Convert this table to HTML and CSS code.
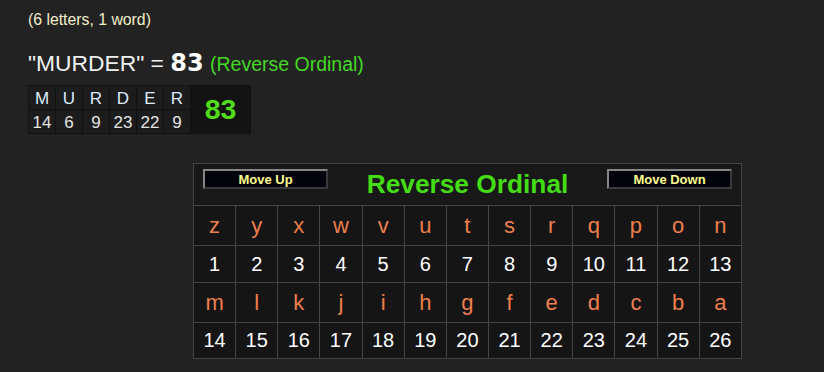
FILE: index.html
```html
<!DOCTYPE html>
<html>
<head>
<meta charset="utf-8">
<link rel="stylesheet" href="styles.css">
</head>
<body>
<div class="page">
  <div class="count">(6 letters, 1 word)</div>
  <div class="result"><span class="word">"MURDER" =</span> <span class="total">83</span> <span class="cipher">(Reverse Ordinal)</span></div>
  <table class="breakdown">
    <tr class="letters"><td>M</td><td>U</td><td>R</td><td>D</td><td>E</td><td>R</td><td class="sum" rowspan="2">83</td></tr>
    <tr class="nums"><td>14</td><td>6</td><td>9</td><td>23</td><td>22</td><td>9</td></tr>
  </table>
  <table class="chart">
    <tr class="head">
      <td colspan="13">
        <div class="head-bar">
          <button class="move">Move Up</button>
          <div class="title">Reverse Ordinal</div>
          <button class="move">Move Down</button>
        </div>
      </td>
    </tr>
    <tr class="l"><td>z</td><td>y</td><td>x</td><td>w</td><td>v</td><td>u</td><td>t</td><td>s</td><td>r</td><td>q</td><td>p</td><td>o</td><td>n</td></tr>
    <tr class="n1"><td>1</td><td>2</td><td>3</td><td>4</td><td>5</td><td>6</td><td>7</td><td>8</td><td>9</td><td>10</td><td>11</td><td>12</td><td>13</td></tr>
    <tr class="l"><td>m</td><td>l</td><td>k</td><td>j</td><td>i</td><td>h</td><td>g</td><td>f</td><td>e</td><td>d</td><td>c</td><td>b</td><td>a</td></tr>
    <tr class="n2"><td>14</td><td>15</td><td>16</td><td>17</td><td>18</td><td>19</td><td>20</td><td>21</td><td>22</td><td>23</td><td>24</td><td>25</td><td>26</td></tr>
  </table>
</div>
</body>
</html>
```
FILE: styles.css
```css
html, body {
  margin: 0;
  padding: 0;
  background: #222222;
}
body {
  font-family: "Liberation Sans", Arial, sans-serif;
  width: 824px;
  height: 372px;
  overflow: hidden;
}
.page {
  padding: 11px 0 0 28px;
}
.count {
  font-size: 15.8px;
  line-height: 18px;
  color: #f2eec8;
}
.result {
  margin-top: 19px;
  height: 30px;
  line-height: 30px;
  font-size: 22.8px;
  color: #f0f0f0;
  white-space: nowrap;
}
.result .total {
  font-family: "DejaVu Sans", Verdana, sans-serif;
  font-weight: bold;
  font-size: 24px;
  color: #ffffff;
}
.result .cipher {
  font-size: 19.5px;
  color: #44d922;
}
.breakdown {
  margin-top: 7px;
  border-collapse: separate;
  border-spacing: 1px;
  background: #111111;
}
.breakdown td {
  width: 26px;
  height: 23px;
  padding: 0;
  background: #1c1c1c;
  text-align: center;
  vertical-align: middle;
  font-size: 17px;
  line-height: 19px;
}
.breakdown .letters td {
  color: #dcecff;
  padding-top: 2px;
  height: 21px;
}
.breakdown .nums td {
  color: #e4e4e4;
  padding-top: 2px;
  height: 21px;
}
.breakdown td.sum {
  width: 59px;
  background: #131313;
  color: #4fdc14;
  font-weight: bold;
  font-size: 28.5px;
  padding-top: 0;
}
.chart {
  margin: 29px 0 0 165px;
  width: 549px;
  table-layout: fixed;
  border-collapse: collapse;
  border: 1px solid #3e3e3e;
  background: #151515;
}
.chart td {
  border: 1px solid #444444;
  padding: 0;
  text-align: center;
  vertical-align: middle;
}
.chart .head td {
  background: #181818;
  vertical-align: top;
  height: 41px;
}
.head-bar {
  display: flex;
  justify-content: space-between;
  align-items: flex-start;
  padding: 5px 9px 0 9px;
}
.move {
  box-sizing: border-box;
  width: 125px;
  height: 20px;
  padding: 0;
  margin: 0;
  background: #03030c;
  border: 2px solid;
  border-color: #858585 #3a3a3a #3a3a3a #858585;
  color: #ffff8c;
  font-family: "Liberation Sans", Arial, sans-serif;
  font-weight: bold;
  font-size: 13px;
  line-height: 15px;
}
.title {
  font-size: 26.3px;
  font-weight: bold;
  line-height: 30px;
  color: #44dd14;
}
.chart tr.l td {
  height: 39px;
  font-size: 22px;
  color: #ee7f4c;
}
.chart tr.n1 td {
  height: 36px;
  font-size: 20px;
  color: #ffffff;
}
.chart tr.n2 td {
  height: 35px;
  font-size: 20px;
  color: #ffffff;
}
```
